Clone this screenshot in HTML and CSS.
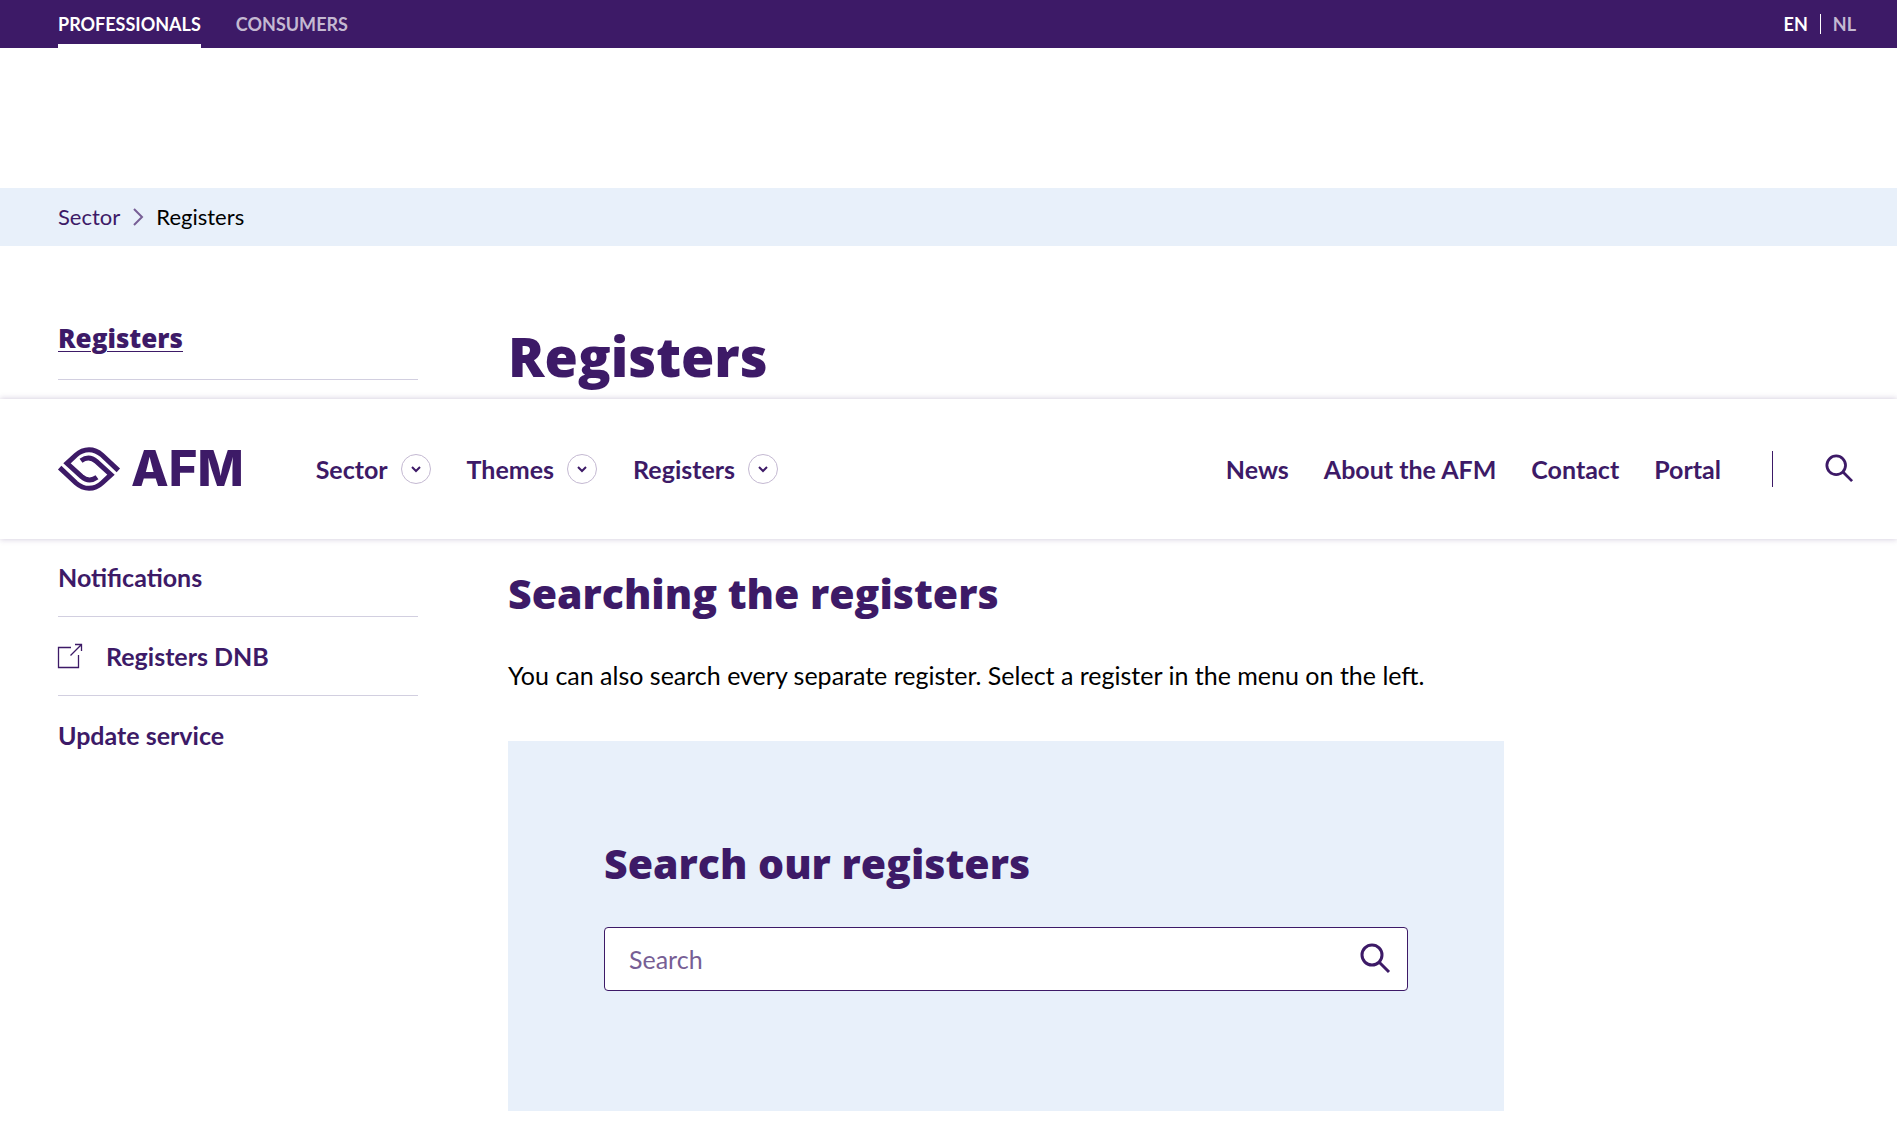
FILE: index.html
```html
<!DOCTYPE html>
<html lang="en">
<head>
<meta charset="utf-8">
<meta name="viewport" content="width=device-width, initial-scale=1">
<title>Registers | AFM Professionals</title>
<link rel="stylesheet" href="styles.css">
</head>
<body>
<div class="topbar">
  <nav class="audience" aria-label="Audience">
    <a class="active" href="#">PROFESSIONALS</a>
    <a href="#">CONSUMERS</a>
  </nav>
  <nav class="languages" aria-label="Language">
    <a class="active" href="#">EN</a>
    <a href="#">NL</a>
  </nav>
</div>

<div class="header-slot">
  <header class="header">
    <a class="logo" href="#">
      <svg class="logo-mark" viewBox="0 0 184 132" fill="none" stroke="currentColor" stroke-width="15" aria-hidden="true">
        <path d="M180 70L131 24Q113 8 92 8Q70 8 53 24L26 49L70 89Q92 108 116 91"/>
        <path d="M4 62L53 108Q71 124 92 124Q114 124 131 108L158 83L114 43Q92 24 68 41"/>
      </svg>
      <span class="logo-name">AFM</span>
    </a>
    <nav class="primary" aria-label="Main">
      <div class="primary-item"><a href="#">Sector</a><button type="button" aria-label="Open Sector"><svg viewBox="0 0 10 6"><path d="M1 1L5 5L9 1"/></svg></button></div>
      <div class="primary-item"><a href="#">Themes</a><button type="button" aria-label="Open Themes"><svg viewBox="0 0 10 6"><path d="M1 1L5 5L9 1"/></svg></button></div>
      <div class="primary-item"><a href="#">Registers</a><button type="button" aria-label="Open Registers"><svg viewBox="0 0 10 6"><path d="M1 1L5 5L9 1"/></svg></button></div>
    </nav>
    <nav class="secondary" aria-label="Service">
      <a href="#">News</a>
      <a href="#">About the AFM</a>
      <a href="#">Contact</a>
      <a href="#">Portal</a>
    </nav>
    <button class="header-search" type="button" aria-label="Search">
      <svg viewBox="0 0 30 30"><circle cx="12" cy="11" r="10"/><path d="M19 18L29 28"/></svg>
    </button>
  </header>
</div>

<nav class="breadcrumb" aria-label="Breadcrumb">
  <a href="#">Sector</a>
  <svg viewBox="0 0 10 18" aria-hidden="true"><path d="M1 1L9 9L1 17"/></svg>
  <span>Registers</span>
</nav>

<div class="page">
  <aside class="sidebar">
    <a class="sidebar-title" href="#">Registers</a>
    <ul>
      <li><a href="#">Notifications</a></li>
      <li><a href="#">
        <svg viewBox="0 0 24 24" aria-hidden="true"><path d="M13 3.500H.5V23.500H20.500V11M12.500 11.500L23 1M17 .5H23.500V7"/></svg>
        Registers DNB</a></li>
      <li><a href="#">Update service</a></li>
    </ul>
  </aside>
  <main>
    <h1>Registers</h1>
    <h2>Searching the registers</h2>
    <p>You can also search every separate register. Select a register in the menu on the left.</p>
    <section class="search-panel">
      <h2><label for="register-search">Search our registers</label></h2>
      <form class="search-box">
        <input id="register-search" type="search" placeholder="Search">
        <button type="button" aria-label="Search registers">
          <svg viewBox="0 0 30 30"><circle cx="12" cy="11" r="10"/><path d="M19 18L29 28"/></svg>
        </button>
      </form>
    </section>
  </main>
</div>
</body>
</html>
```

FILE: styles.css
```css
:root {
  --purple: #3d1a67;
  --pale-blue: #e8f0fa;
  --line: #d2cfe0;
}

* { box-sizing: border-box; }

body {
  margin: 0;
  background: #fff;
  color: #000;
  font: 25px/36px Lato, "Open Sans", sans-serif;
}

a { color: var(--purple); text-decoration: none; }

button {
  padding: 0;
  border: 0;
  background: none;
  color: var(--purple);
  cursor: pointer;
}

svg { display: block; flex: none; overflow: visible; fill: none; stroke: currentColor; }

h1, h2, p, ul { margin: 0; }

h1, h2, .sidebar-title {
  color: var(--purple);
  font-family: "Open Sans", sans-serif;
  font-weight: 800;
}

.topbar {
  display: flex;
  justify-content: space-between;
  height: 48px;
  padding: 0 41px 0 58px;
  background: var(--purple);
  font-size: 18px;
  font-weight: 700;
  line-height: 48px;
}

.topbar a { color: #c4b9d2; }
.topbar a.active { color: #fff; }

.audience { display: flex; gap: 35px; }
.audience .active { border-bottom: 4px solid #fff; }

.languages { display: flex; align-items: center; }
.languages a { line-height: 20px; }
.languages a + a {
  margin-left: 12px;
  padding-left: 12px;
  border-left: 1px solid #fff;
}

.header-slot { position: relative; height: 140px; }

.header {
  position: absolute;
  inset: 351px 0 auto;
  display: flex;
  align-items: center;
  height: 140px;
  padding: 0 44px 0 58px;
  background: #fff;
  box-shadow: 0 0 6px rgba(61, 26, 103, 0.25);
  font-weight: 700;
}

.logo { display: flex; align-items: center; gap: 11px; }
.logo-mark { width: 62px; height: 44px; }
.logo-name { font: 800 49px/48px Inter, sans-serif; }

.primary { display: flex; gap: 36px; margin-left: 72px; }
.primary-item { display: flex; align-items: center; gap: 13px; }
.primary button {
  display: grid;
  place-items: center;
  width: 30px;
  height: 30px;
  border: 1px solid #c4b9d2;
  border-radius: 50%;
}
.primary svg { width: 10px; height: 6px; stroke-width: 2; }

.secondary {
  display: flex;
  gap: 35px;
  margin-left: auto;
}

.header-search {
  display: flex;
  align-items: center;
  height: 36px;
  margin-left: 51px;
  padding-left: 52px;
  border-left: 1px solid var(--purple);
}
.header-search svg { width: 28px; height: 28px; stroke-width: 3; }

.breadcrumb {
  display: flex;
  align-items: center;
  gap: 13px;
  height: 58px;
  padding: 0 58px;
  background: var(--pale-blue);
  font-size: 22px;
}
.breadcrumb svg { width: 10px; height: 18px; stroke: #775e95; stroke-width: 2; }

.page {
  display: grid;
  grid-template-columns: 360px minmax(0, 996px);
  gap: 90px;
  padding: 74px 58px 26px;
}

.sidebar { font-weight: 700; }
.sidebar-title {
  display: block;
  padding-bottom: 23px;
  border-bottom: 1px solid var(--line);
  font-size: 26px;
  text-decoration: underline;
  text-decoration-thickness: 1px;
  text-underline-offset: 3px;
}
.sidebar ul { margin-top: 158px; padding: 0; list-style: none; }
.sidebar li + li { border-top: 1px solid var(--line); }
.sidebar li a {
  display: flex;
  align-items: center;
  gap: 24px;
  padding: 21px 0;
}
.sidebar li svg { width: 24px; height: 24px; stroke-width: 1.3; }

h1 { font-size: 54px; line-height: 72px; }
h2 { font-size: 41px; line-height: 56px; }
main > h2 { margin-top: 173px; }
main > p { margin-top: 36px; }

.search-panel {
  margin-top: 48px;
  padding: 94px 96px 120px;
  background: var(--pale-blue);
}
.search-box {
  display: flex;
  align-items: center;
  height: 64px;
  margin-top: 36px;
  padding: 0 17px 0 24px;
  border: 1px solid var(--purple);
  border-radius: 4px;
  background: #fff;
}
.search-box input {
  flex: 1;
  min-width: 0;
  padding: 0;
  border: 0;
  outline: 0;
  background: none;
  color: var(--purple);
  font: inherit;
}
.search-box input::placeholder { color: #775e95; opacity: 1; }
.search-box svg { width: 30px; height: 30px; stroke-width: 3; }
```
